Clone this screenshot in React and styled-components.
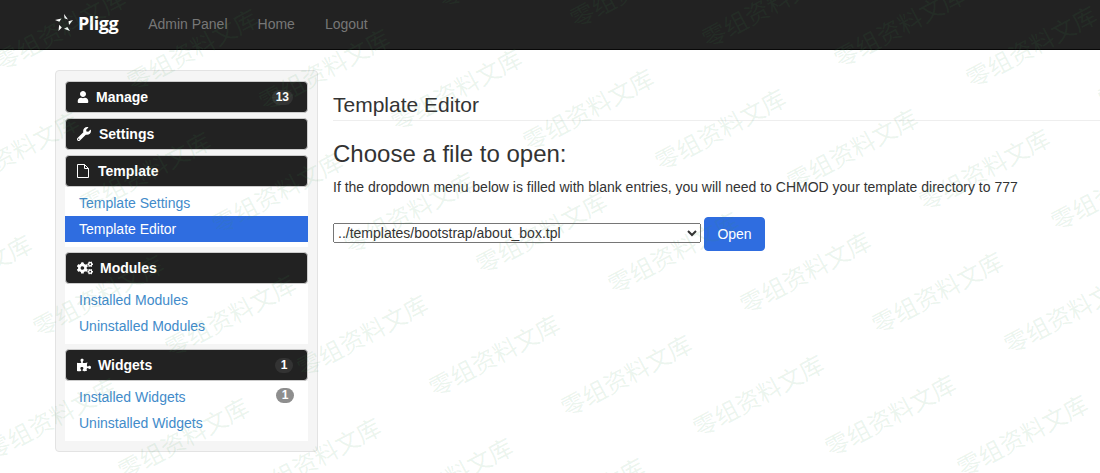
import styled, { createGlobalStyle } from 'styled-components';
import { FaUser, FaWrench, FaCogs, FaPuzzlePiece } from 'react-icons/fa';

const GlobalStyle = createGlobalStyle`
  html, body {
    margin: 0;
    padding: 0;
    background: #fff;
    overflow: hidden;
  }
  body {
    font-family: "Liberation Sans", Arial, sans-serif;
    font-size: 14px;
    color: #333;
  }
`;

const Page = styled.div`
  position: relative;
  width: 1100px;
  height: 473px;
  overflow: hidden;
`;

const Navbar = styled.nav`
  box-sizing: border-box;
  display: flex;
  align-items: center;
  height: 50px;
  padding: 0 0 3px 55px;
  background: #222;
  border-bottom: 1px solid #080808;
`;

const Brand = styled.a`
  display: flex;
  align-items: center;
  gap: 5px;
  margin-right: 30px;
  font-family: "Open Sans", sans-serif;
  font-size: 18px;
  font-weight: 700;
  letter-spacing: -0.5px;
  color: #fff;
`;

const NavLink = styled.a`
  margin: 2px 30px 0 0;
  color: #777;
`;

const Layout = styled.div`
  display: flex;
  align-items: flex-start;
  padding: 20px 0 0 55px;
`;

const Sidebar = styled.aside`
  box-sizing: border-box;
  flex: none;
  width: 263px;
  padding: 10px 9px;
  background: #f5f5f5;
  border: 1px solid #e3e3e3;
  border-radius: 4px;
`;

const Group = styled.section`
  margin-bottom: 5px;
  &:last-child {
    margin-bottom: 0;
  }
`;

const Header = styled.div`
  box-sizing: border-box;
  display: flex;
  align-items: center;
  height: 32px;
  padding: 0 14px 0 11px;
  background: #222;
  border: 1px solid #ccc;
  border-radius: 4px;
  font-weight: 700;
  color: #fff;
`;

const IconBox = styled.span`
  display: flex;
  align-items: center;
  flex: none;
  width: ${(p) => p.$width}px;
  margin-right: 7px;
`;

const HeaderBadge = styled.span`
  box-sizing: border-box;
  margin-left: auto;
  min-width: 18px;
  padding: 1px 4px;
  background: #333;
  border-radius: 10px;
  font-size: 12px;
  line-height: 13px;
  text-align: center;
`;

const List = styled.ul`
  margin: 0;
  padding: 3px 0 5px;
  list-style: none;
  background: #fff;
`;

const Item = styled.li`
  display: flex;
  justify-content: space-between;
  height: 26px;
  padding: 0 14px;
  line-height: 26px;
  color: ${(p) => (p.$active ? '#fff' : '#428bca')};
  background: ${(p) => (p.$active ? '#2f6de0' : 'transparent')};
`;

const ItemBadge = styled.span`
  box-sizing: border-box;
  align-self: flex-start;
  min-width: 18px;
  margin-top: 4px;
  padding: 1px 4px;
  background: #8e8e8e;
  border-radius: 10px;
  font-size: 12px;
  font-weight: 700;
  line-height: 13px;
  text-align: center;
  color: #fff;
`;

const Main = styled.main`
  flex: 1;
  margin-left: 15px;
`;

const PageTitle = styled.h2`
  margin: 24px 0 0;
  padding-bottom: 4px;
  border-bottom: 1px solid #eee;
  font-size: 21px;
  font-weight: 400;
  line-height: 22px;
`;

const Heading = styled.h3`
  margin: 20px 0 0;
  font-size: 24px;
  font-weight: 400;
  line-height: 26px;
`;

const Note = styled.p`
  margin: 10px 0 0;
  line-height: 20px;
`;

const FileForm = styled.form`
  display: flex;
  align-items: center;
  gap: 3px;
  margin-top: 20px;
`;

const FileSelect = styled.select`
  width: 368px;
  height: 20px;
  margin-top: -2px;
  color: #333;
  font-family: "Liberation Sans", Arial, sans-serif;
  font-size: 14px;
`;

const OpenButton = styled.button`
  width: 61px;
  height: 34px;
  padding: 0;
  background: #2f6de0;
  border: 1px solid #2f6de0;
  border-radius: 4px;
  font-family: "Liberation Sans", Arial, sans-serif;
  font-size: 14px;
  color: #fff;
`;

const Watermarks = styled.div`
  position: absolute;
  inset: 0;
  overflow: hidden;
  pointer-events: none;
`;

const Mark = styled.span.attrs((p) => ({
  style: { left: p.$x, top: p.$y },
}))`
  position: absolute;
  transform: translate(-50%, -50%) rotate(-28deg);
  font-family: "Noto Sans CJK SC", sans-serif;
  font-size: 24px;
  line-height: 1;
  white-space: nowrap;
  color: rgba(60, 150, 80, 0.1);
`;

// watermark tiles sit on a skewed lattice
const marks = [];
for (let i = -8; i < 12; i++) {
  for (let j = -3; j < 6; j++) {
    const x = 494 + i * 132 + j * 47;
    const y = 355 + i * 20 - j * 123;
    if (x > -90 && x < 1190 && y > -70 && y < 540) marks.push({ x, y });
  }
}

function PliggLogo() {
  return (
    <svg width="18" height="18" viewBox="0 0 18 18" fill="#fff">
      <path d="M9 0L13 5.5L9.5 4.2Z" />
      <path d="M18 6L14 11L13.5 7.2Z" />
      <path d="M15 17L9 14.8L12.3 13Z" />
      <path d="M3.5 17L4.2 10.8L6.8 13.6Z" />
      <path d="M0 6L6.5 4.6L4.4 7.8Z" />
    </svg>
  );
}

function FileIcon() {
  return (
    <svg width="12" height="14" viewBox="0 0 12 14" fill="none" stroke="#fff" strokeWidth="1">
      <path d="M.5.5h7l4 4v9h-11z" />
      <path d="M7.5.5v4h4" />
    </svg>
  );
}

function App() {
  return (
    <Page>
      <GlobalStyle />
      <Navbar>
        <Brand>
          <PliggLogo />
          Pligg
        </Brand>
        <NavLink>Admin Panel</NavLink>
        <NavLink>Home</NavLink>
        <NavLink>Logout</NavLink>
      </Navbar>
      <Layout>
        <Sidebar>
          <Group>
            <Header>
              <IconBox $width={12}><FaUser size={12} /></IconBox>
              Manage
              <HeaderBadge>13</HeaderBadge>
            </Header>
          </Group>
          <Group>
            <Header>
              <IconBox $width={15}><FaWrench size={14} /></IconBox>
              Settings
            </Header>
          </Group>
          <Group>
            <Header>
              <IconBox $width={14}><FileIcon /></IconBox>
              Template
            </Header>
            <List>
              <Item>Template Settings</Item>
              <Item $active>Template Editor</Item>
            </List>
          </Group>
          <Group>
            <Header>
              <IconBox $width={16}><FaCogs size={16} /></IconBox>
              Modules
            </Header>
            <List>
              <Item>Installed Modules</Item>
              <Item>Uninstalled Modules</Item>
            </List>
          </Group>
          <Group>
            <Header>
              <IconBox $width={14}><FaPuzzlePiece size={14} /></IconBox>
              Widgets
              <HeaderBadge>1</HeaderBadge>
            </Header>
            <List>
              <Item>
                Installed Widgets
                <ItemBadge>1</ItemBadge>
              </Item>
              <Item>Uninstalled Widgets</Item>
            </List>
          </Group>
        </Sidebar>
        <Main>
          <PageTitle>Template Editor</PageTitle>
          <Heading>Choose a file to open:</Heading>
          <Note>
            If the dropdown menu below is filled with blank entries, you will need to CHMOD your
            template directory to 777
          </Note>
          <FileForm>
            <FileSelect defaultValue="about_box">
              <option value="about_box">../templates/bootstrap/about_box.tpl</option>
            </FileSelect>
            <OpenButton type="button">Open</OpenButton>
          </FileForm>
        </Main>
      </Layout>
      <Watermarks>
        {marks.map((m) => (
          <Mark key={`${m.x}-${m.y}`} $x={m.x} $y={m.y}>零组资料文库</Mark>
        ))}
      </Watermarks>
    </Page>
  );
}

export default App;
